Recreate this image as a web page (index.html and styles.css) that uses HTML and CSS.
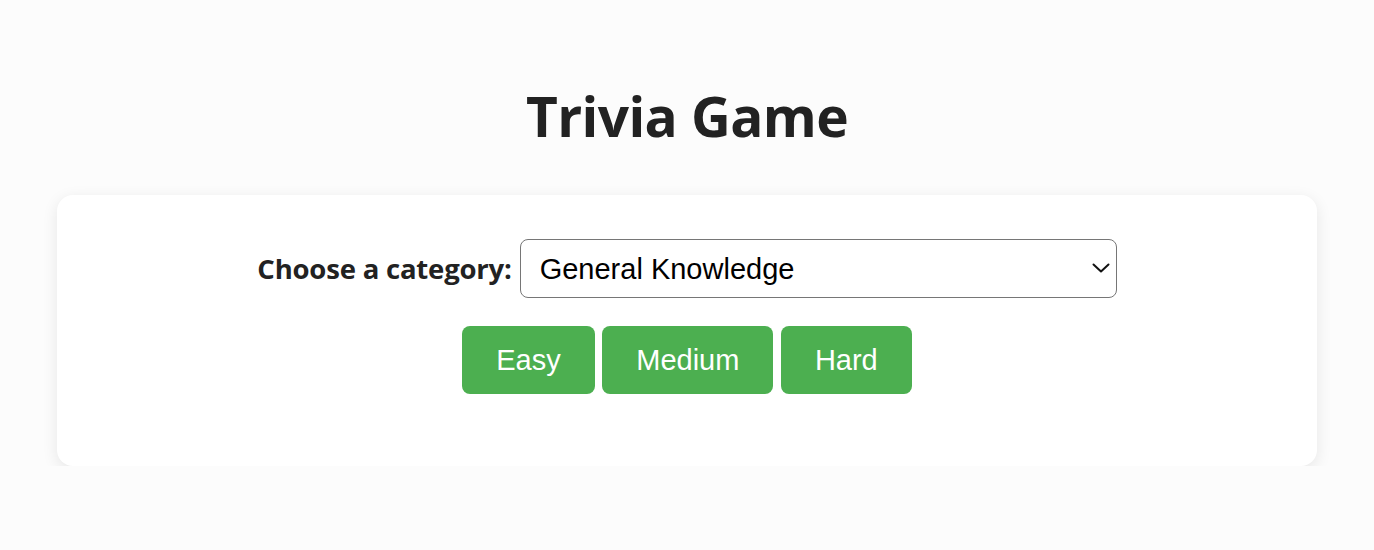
FILE: index.html
```html
<!DOCTYPE html>
<html lang="en">
<head>
<meta charset="utf-8">
<title>Trivia Game</title>
<link rel="stylesheet" href="styles.css">
</head>
<body>
<main class="page">
  <h1 class="title">Trivia Game</h1>
  <section class="card">
    <div class="category-row">
      <label class="category-label" for="category">Choose a category:</label>
      <div class="select-wrap">
        <select id="category" class="category-select">
          <option>General Knowledge</option>
          <option>Science</option>
          <option>History</option>
        </select>
        <svg class="chevron" width="18" height="12" viewBox="0 0 18 12" aria-hidden="true">
          <path d="M1.5 2.5 L9 9.5 L16.5 2.5" fill="none" stroke="#111" stroke-width="2" stroke-linecap="round" stroke-linejoin="round"/>
        </svg>
      </div>
    </div>
    <div class="difficulty">
      <button class="btn">Easy</button>
      <button class="btn">Medium</button>
      <button class="btn">Hard</button>
    </div>
  </section>
</main>
</body>
</html>
```
FILE: styles.css
```css
* { box-sizing: border-box; }

html, body {
  margin: 0;
  background: #fcfcfc;
}

body {
  font-family: "Open Sans", "Noto Sans", sans-serif;
  color: #222;
}

.page {
  display: flex;
  flex-direction: column;
  align-items: stretch;
  padding: 80px 57px 0;
}

.title {
  margin: 0 0 43px;
  text-align: center;
  font-size: 55px;
  line-height: 72px;
  font-weight: 700;
  color: #222;
  letter-spacing: -0.6px;
}

.card {
  background: #fff;
  border-radius: 16px;
  box-shadow: 0 4px 16px rgba(0, 0, 0, 0.09);
  padding: 44px 40px 72px;
  display: flex;
  flex-direction: column;
  align-items: center;
  gap: 28px;
}

.category-row {
  display: flex;
  align-items: center;
  gap: 8px;
}

.category-label {
  font-size: 27.5px;
  font-weight: 700;
  color: #222;
  letter-spacing: -0.2px;
}

.select-wrap {
  position: relative;
  width: 597px;
}

.category-select {
  appearance: none;
  -webkit-appearance: none;
  width: 100%;
  height: 59px;
  padding: 0 50px 0 19px;
  font-family: "Liberation Sans", Arial, sans-serif;
  font-size: 29px;
  color: #000;
  background: #fff;
  border: 1px solid #767676;
  border-radius: 8px;
}

.chevron {
  position: absolute;
  right: 7px;
  top: 23px;
  pointer-events: none;
}

.difficulty {
  display: flex;
  gap: 7.5px;
}

.btn {
  height: 68px;
  padding: 0 34px;
  font-family: "Liberation Sans", Arial, sans-serif;
  font-size: 29px;
  color: #fff;
  background: #4caf50;
  border: none;
  border-radius: 8px;
}
```
